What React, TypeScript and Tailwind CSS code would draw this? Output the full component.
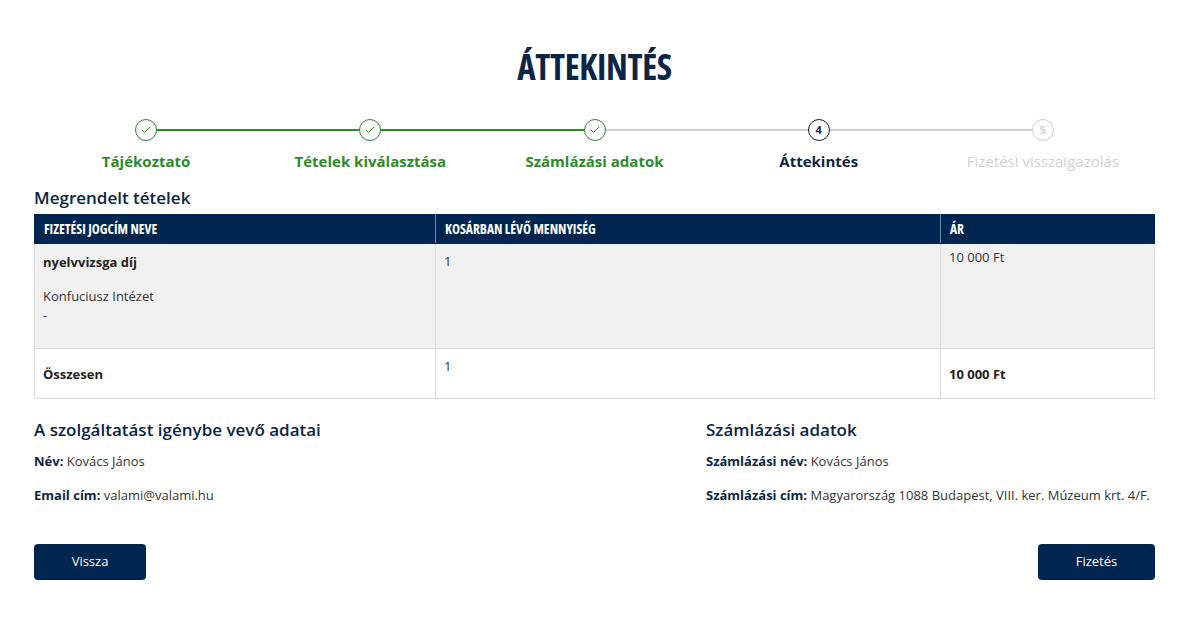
import { Check } from "lucide-react";

const steps = [
  { label: "Tájékoztató", state: "done" },
  { label: "Tételek kiválasztása", state: "done" },
  { label: "Számlázási adatok", state: "done" },
  { label: "Áttekintés", state: "active" },
  { label: "Fizetési visszaigazolás", state: "todo" },
];

function Stepper() {
  return (
    <div className="flex w-full">
      {steps.map((s, i) => {
        const leftGreen = i > 0 && steps[i].state === "done";
        const leftGray = i > 0 && !leftGreen;
        const rightGreen = i < steps.length - 1 && steps[i + 1].state === "done";
        const rightGray = i < steps.length - 1 && !rightGreen;
        return (
          <div key={i} className="flex-1 flex flex-col items-center">
            <div className="relative w-full h-[22px] flex items-center justify-center">
              {(leftGreen || leftGray) && (
                <div className={`absolute left-0 right-1/2 top-[10px] h-[2px] ${leftGreen ? "bg-[#2f8a2a]" : "bg-[#cfcfcf]"}`} />
              )}
              {(rightGreen || rightGray) && (
                <div className={`absolute left-1/2 right-0 top-[10px] h-[2px] ${rightGreen ? "bg-[#2f8a2a]" : "bg-[#cfcfcf]"}`} />
              )}
              {s.state === "done" && (
                <div className="relative z-10 w-[22px] h-[22px] rounded-full border border-[#2f8a2a] bg-white flex items-center justify-center">
                  <Check className="w-[12px] h-[12px] text-[#2f8a2a]" strokeWidth={2} />
                </div>
              )}
              {s.state === "active" && (
                <div className="relative z-10 w-[22px] h-[22px] rounded-full border-[1.5px] border-[#1d1b4d] bg-white flex items-center justify-center text-[11px] font-bold text-[#1d1b4d]">
                  4
                </div>
              )}
              {s.state === "todo" && (
                <div className="relative z-10 w-[22px] h-[22px] rounded-full border border-[#d0d0d0] bg-white flex items-center justify-center text-[11px] font-bold text-[#d0d0d0]">
                  5
                </div>
              )}
            </div>
            <div
              className={`mt-[10px] text-[15px] leading-[20px] ${
                s.state === "done"
                  ? "font-bold text-[#2f8a2a]"
                  : s.state === "active"
                  ? "font-bold text-[#0b2546]"
                  : "font-normal text-[#d2d2d2]"
              }`}
            >
              {s.label}
            </div>
          </div>
        );
      })}
    </div>
  );
}

export default function App() {
  return (
    <div className="min-h-[622px] bg-white text-[#333] font-['Open_Sans',sans-serif]">
      <div className="w-[1121px] ml-[34px] pt-[44px]">
        <h1 className="text-center text-[35px] leading-[46px] font-bold font-stretch-condensed tracking-[-0.3px] text-[#0b2546]">
          ÁTTEKINTÉS
        </h1>

        <div className="mt-[29px]">
          <Stepper />
        </div>

        <h2 className="mt-[15px] text-[17px] leading-[24px] font-semibold text-[#0b2546]">Megrendelt tételek</h2>

        <table className="mt-[4px] w-full border-collapse text-[13px]">
          <thead>
            <tr className="bg-[#00264f] text-white text-[13.5px] font-bold font-stretch-condensed uppercase">
              <th className="w-[401px] h-[29px] px-[9px] text-left border border-[#00264f] border-r-[#6d85a6]">Fizetési jogcím neve</th>
              <th className="w-[505px] h-[29px] px-[9px] text-left border border-[#00264f] border-r-[#6d85a6]">Kosárban lévő mennyiség</th>
              <th className="h-[29px] px-[9px] text-left border border-[#00264f]">Ár</th>
            </tr>
          </thead>
          <tbody>
            <tr className="bg-[#f1f1f1] align-top">
              <td className="h-[105px] px-[8px] pt-[8px] border border-[#dcdcdc]">
                <div className="font-bold text-[#222] leading-[20px]">nyelvvizsga díj</div>
                <div className="mt-[14px] leading-[20px]">Konfuciusz Intézet</div>
                <div className="leading-[18px]">-</div>
              </td>
              <td className="px-[8px] pt-[7px] border border-[#dcdcdc] leading-[20px]">1</td>
              <td className="px-[8px] pt-[3px] border border-[#dcdcdc] leading-[20px]">10 000 Ft</td>
            </tr>
            <tr className="bg-white">
              <td className="h-[50px] px-[8px] pt-[2px] border border-[#dcdcdc] font-bold text-[#222] align-middle">Összesen</td>
              <td className="px-[8px] pt-[7px] border border-[#dcdcdc] align-top leading-[20px]">1</td>
              <td className="px-[8px] pt-[2px] border border-[#dcdcdc] font-bold text-[#222] align-middle">10 000 Ft</td>
            </tr>
          </tbody>
        </table>

        <div className="mt-[19px] flex">
          <div className="w-[672px]">
            <h3 className="text-[17px] leading-[24px] font-semibold text-[#0b2546]">A szolgáltatást igénybe vevő adatai</h3>
            <p className="mt-[10px] text-[13px] leading-[18px]">
              <span className="font-bold text-[#0b2546]">Név:</span> Kovács János
            </p>
            <p className="mt-[16px] text-[13px] leading-[18px]">
              <span className="font-bold text-[#0b2546]">Email cím:</span> valami@valami.hu
            </p>
          </div>
          <div className="flex-1">
            <h3 className="text-[17px] leading-[24px] font-semibold text-[#0b2546]">Számlázási adatok</h3>
            <p className="mt-[10px] text-[13px] leading-[18px]">
              <span className="font-bold text-[#0b2546]">Számlázási név:</span> Kovács János
            </p>
            <p className="mt-[16px] text-[13px] leading-[18px]">
              <span className="font-bold text-[#0b2546]">Számlázási cím:</span> Magyarország 1088 Budapest, VIII. ker. Múzeum krt. 4/F.
            </p>
          </div>
        </div>

        <div className="mt-[40px] flex justify-between">
          <button className="w-[112px] h-[36px] rounded-[4px] bg-[#00264f] text-white text-[13px]">Vissza</button>
          <button className="w-[117px] h-[36px] rounded-[4px] bg-[#00264f] text-white text-[13px]">Fizetés</button>
        </div>
      </div>
    </div>
  );
}
